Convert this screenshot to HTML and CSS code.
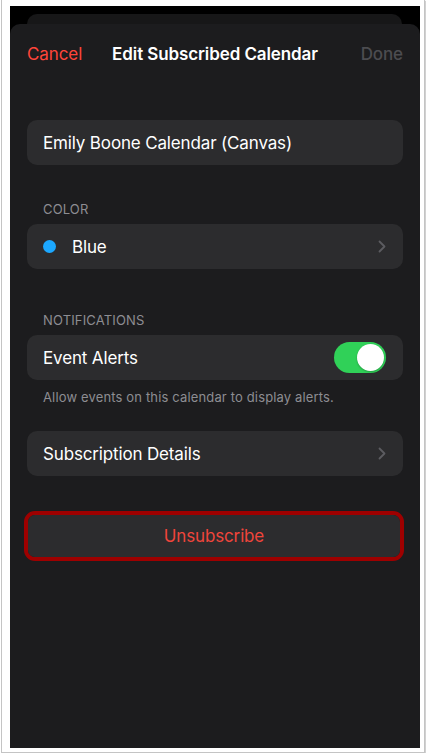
FILE: index.html
```html
<!DOCTYPE html>
<html lang="en">
<head>
<meta charset="utf-8">
<title>Edit Subscribed Calendar</title>
<link rel="stylesheet" href="styles.css">
</head>
<body>
<div class="frame">
  <div class="screen">
    <div class="sheet-behind"></div>
    <div class="sheet">
      <header class="nav">
        <span class="nav-btn cancel">Cancel</span>
        <span class="nav-title">Edit Subscribed Calendar</span>
        <span class="nav-btn done">Done</span>
      </header>

      <div class="row name-field">Emily Boone Calendar (Canvas)</div>

      <div class="section-label">COLOR</div>
      <div class="row">
        <span class="dot"></span>
        <span class="row-text">Blue</span>
        <svg class="chevron" width="8" height="13" viewBox="0 0 8 13"><path d="M1.5 1.5 L6.5 6.5 L1.5 11.5" fill="none" stroke="currentColor" stroke-width="1.8" stroke-linecap="round" stroke-linejoin="round"/></svg>
      </div>

      <div class="section-label notif">NOTIFICATIONS</div>
      <div class="row">
        <span class="row-text">Event Alerts</span>
        <span class="toggle"><span class="knob"></span></span>
      </div>
      <div class="footnote">Allow events on this calendar to display alerts.</div>

      <div class="row details">
        <span class="row-text">Subscription Details</span>
        <svg class="chevron" width="8" height="13" viewBox="0 0 8 13"><path d="M1.5 1.5 L6.5 6.5 L1.5 11.5" fill="none" stroke="currentColor" stroke-width="1.8" stroke-linecap="round" stroke-linejoin="round"/></svg>
      </div>

      <div class="unsubscribe-ring">
        <div class="unsubscribe">Unsubscribe</div>
      </div>
    </div>
  </div>
</div>
</body>
</html>
```

FILE: styles.css
```css
* { box-sizing: border-box; }

html, body {
  margin: 0;
  padding: 0;
  background: #ffffff;
  font-family: Inter, "Liberation Sans", sans-serif;
}

.frame {
  margin-left: 1px;
  width: 424px;
  height: 753px;
  padding: 6px 4px 4px 8px;
  border: 1px solid #c4c4c4;
  border-top: none;
  box-shadow: 1px 1px 1px rgba(0, 0, 0, 0.18);
  background: #fff;
  display: flex;
}

.screen {
  flex: 1;
  background: #000;
  padding-top: 8px;
  display: flex;
  flex-direction: column;
  overflow: hidden;
}

.sheet-behind {
  height: 10px;
  margin: 0 18px 0 17px;
  background: #171718;
  border-radius: 10px 10px 0 0;
  flex: none;
}

.sheet {
  flex: 1;
  background: #1c1c1e;
  border-radius: 10px 10px 0 0;
  padding: 0 17px;
  display: flex;
  flex-direction: column;
}

.nav {
  height: 60px;
  display: grid;
  grid-template-columns: 1fr auto 1fr;
  align-items: center;
  font-size: 17px;
  letter-spacing: -0.1px;
}

.cancel { color: #ff453a; }
.done { color: #4c4c50; font-weight: 500; justify-self: end; }

.nav-title {
  color: #fff;
  font-weight: 600;
}

.row {
  height: 45px;
  background: #2c2c2e;
  border-radius: 10px;
  display: flex;
  align-items: center;
  padding: 0 17px 0 16px;
  color: #fff;
  font-size: 17px;
  letter-spacing: -0.15px;
}

.name-field { margin-top: 36px; }

.section-label {
  margin: 36px 0 7px 16px;
  line-height: 16px;
  font-size: 13px;
  letter-spacing: 0.15px;
  color: #8d8d92;
}

.section-label.notif { margin-top: 43px; }

.dot {
  width: 13px;
  height: 13px;
  border-radius: 50%;
  background: #1ca8ff;
  margin-right: 16px;
  flex: none;
}

.row-text { flex: 1; }

.chevron {
  color: #5c5c61;
  flex: none;
}

.toggle {
  width: 52px;
  height: 31px;
  border-radius: 16px;
  background: #30d158;
  display: flex;
  justify-content: flex-end;
  align-items: center;
  padding: 2px;
}

.knob {
  width: 27px;
  height: 27px;
  border-radius: 50%;
  background: #fff;
  box-shadow: 0 1px 2px rgba(0, 0, 0, 0.25);
}

.footnote {
  margin: 9px 0 0 16px;
  line-height: 16px;
  font-size: 13px;
  letter-spacing: 0.15px;
  color: #8d8d92;
}

.details { margin-top: 26px; }

.unsubscribe-ring {
  margin: 35px -1px 0 -3px;
  height: 50px;
  border: 4px solid #9e0000;
  border-radius: 11px;
  display: flex;
}

.unsubscribe {
  flex: 1;
  background: #2c2c2e;
  border-radius: 7px;
  display: flex;
  align-items: center;
  justify-content: center;
  color: #f0453b;
  font-size: 17px;
  letter-spacing: -0.15px;
}
```
